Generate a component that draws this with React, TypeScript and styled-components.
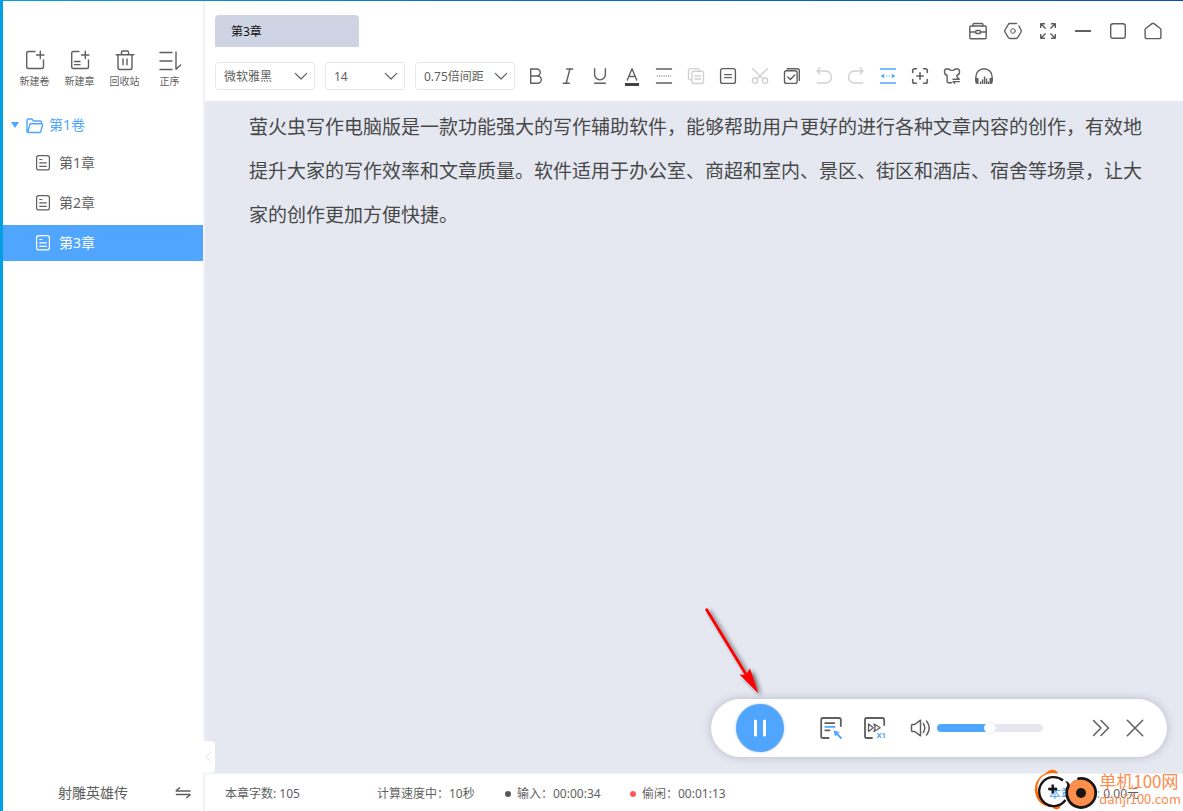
import React, { useState } from "react";
import styled, { createGlobalStyle } from "styled-components";

const GlobalStyle = createGlobalStyle`
  *, *::before, *::after { box-sizing: border-box; }
  body {
    margin: 0;
    background: #fff;
    color: #5f5f5f;
    font-family: "Noto Sans", "Noto Sans CJK SC", sans-serif;
    font-size: 12px;
    line-height: 20px;
  }
  button, input, select { font: inherit; color: inherit; }
  button { border: 0; padding: 0; background: none; cursor: pointer; }
  svg { display: block; overflow: visible; }
`;

/* ---------- icons ---------- */

const IconSvg = styled.svg<{ $weight?: number }>`
  flex: none;
  fill: none;
  stroke: currentColor;
  stroke-width: ${(p) => p.$weight ?? 1.4};
  stroke-linecap: round;
  stroke-linejoin: round;
`;

type IconProps = { size?: number; weight?: number; children: React.ReactNode };

const Icon = ({ size = 20, weight, children }: IconProps) => (
  <IconSvg width={size} height={size} viewBox={`0 0 ${size} ${size}`} $weight={weight} aria-hidden="true">
    {children}
  </IconSvg>
);

const icons = {
  newVolume: (
    <>
      <path d="M10 1.5H3.3Q1.7 1.5 1.7 3V17Q1.7 18.5 3.3 18.5H17Q18.5 18.5 18.5 17V10" />
      <path d="M15.3 1.2v7.4M11.6 5h7.4" />
    </>
  ),
  newChapter: (
    <>
      <path d="M9 1.5H3.3Q1.7 1.5 1.7 3V17Q1.7 18.5 3.3 18.5H17Q18.5 18.5 18.5 17V10" />
      <path d="M15.3 1.2v7.4M11.6 5h7.4M4.5 11.5h5.5M4.5 14.6h5.5" />
    </>
  ),
  trash: (
    <path d="M1.2 4.7h17.6M6.5 4.5V2.2Q6.5 1 7.7 1h4.6Q13.5 1 13.5 2.2v2.3M3 5v12.6q0 1.9 1.8 1.9h10.4q1.8 0 1.8-1.9V5M8 9v5.8M12 9v5.8" />
  ),
  sort: <path d="M0 2.5h12M0 11h12M0 19.5h12M16 2v17.3l4.6-4.3" />,
  bold: <path d="M4.7 3h6a3.5 3.5 0 0 1 0 7h-6M10.7 10h1a3.6 3.6 0 0 1 0 7.2h-7V3" />,
  italic: <path d="M8.7 3h6M5.3 17.2h6M11.9 3L8.2 17.2" />,
  underline: <path d="M4.6 2.7v5.8a5.4 5.4 0 0 0 10.8 0V2.7M4.6 17.3h10.8" />,
  fontColor: (
    <>
      <path d="M5.3 14L10 2.7 14.7 14M6.8 10.5h6.4" />
      <rect x="3" y="17" width="14" height="3" fill="#434343" stroke="none" />
    </>
  ),
  divider: (
    <>
      <path d="M2.5 3h15M2.5 17h15" />
      <path d="M3 10h14" strokeWidth="1" strokeDasharray="1 1.2" strokeLinecap="butt" />
    </>
  ),
  copy: (
    <>
      <path d="M4.8 13.7h-.4q-1.9 0-1.9-2V4.6q0-2 2-2h7q2 0 2 1.9" />
      <rect x="6" y="5.3" width="11.5" height="12.2" rx="2" />
      <path d="M9 10h5.5M9 13h5.5" />
    </>
  ),
  paste: (
    <>
      <rect x="2.6" y="2.6" width="14.8" height="14.8" rx="2" />
      <path d="M6.6 8.6h6.8M6.6 11.6h6.8" />
    </>
  ),
  cut: (
    <>
      <circle cx="5" cy="14.7" r="2.7" />
      <circle cx="15" cy="14.7" r="2.7" />
      <path d="M2.7 2.7L13 12.8M17.3 2.7L7 12.8" />
    </>
  ),
  selectAll: (
    <>
      <rect x="2.5" y="4.8" width="12.6" height="12.6" rx="2" />
      <path d="M5 2.8h10.3q2 0 2 2v9.7M5.8 11l2.6 2.6 4.4-4.6" />
    </>
  ),
  undo: <path d="M3 5h8.5a6 6 0 0 1 0 12H3.3M6 2L3 5l3 3" />,
  redo: <path d="M17 5H8.5a6 6 0 0 0 0 12h8.2M14 2l3 3-3 3" />,
  pageWidth: (
    <>
      <path d="M2.5 3h15M2.5 17h15" />
      <path d="M2.5 10l3.7-2.2v4.4zM17.5 10l-3.700-2.200v4.400zM8 9.500h1v1H8zM11 9.500h1v1h-1z" fill="currentColor" stroke="none" />
    </>
  ),
  focus: (
    <path
      d="M2.7 6.500V4.500q0-1.800 1.800-1.800h2M13.500 2.700h2q1.800 0 1.800 1.800v2M17.300 13.500v2q0 1.800-1.800 1.800h-2M6.500 17.300h-2q-1.800 0-1.800-1.800v-2M10 6.800v6.400M6.800 10h6.400"
      strokeWidth="1.600"
    />
  ),
  skin: (
    <>
      <path d="M9.500 16.800H6.500q-1.400 0-1.400-1.400V9.200q-2 0-2.600-2.700Q2.200 3.500 4 3h2.200q1 0 1.600.8 2.200 1.200 4.400 0 .6-.8 1.600-.8H16q1.800.5 1.500 3.500-.6 2.700-2.600 2.700v1.500" />
      <path d="M11 13.200h6.300l-1.700-1.600M17.300 15.600H11l1.700 1.700" />
    </>
  ),
  listen: (
    <>
      <path d="M1.900 14v-3.200a8.100 8.100 0 0 1 16.200 0V14" />
      <path d="M1.200 12h3.300v6H3.200q-2 0-2-2zM18.800 12h-3.300v6h1.300q2 0 2-2z" fill="currentColor" stroke="none" />
      <path d="M6.500 15.500V18M8.500 13.500V18M10.500 10.500V18M12.500 12.500V18M14.300 15.500V18" strokeLinecap="butt" />
    </>
  ),
  toolbox: (
    <>
      <rect x="1.800" y="5" width="16.400" height="12.800" rx="1.200" />
      <path d="M5 5V3.700q0-1.200 1.200-1.200h7.600q1.200 0 1.200 1.200V5M1.800 11h5.700M12.500 11h5.700" />
      <rect x="7.800" y="9.500" width="4.600" height="3" rx=".8" />
    </>
  ),
  settings: (
    <>
      <path d="M16 5l2 4q.6 1 0 2l-3.200 5.400q-.6 1.100-1.800 1.100H7q-1.200 0-1.800-1.100L2 11q-.6-1 0-2l3.200-5.400Q5.800 2.500 7 2.500h6.500" />
      <circle cx="10" cy="10" r="2.300" strokeWidth="1" />
    </>
  ),
  fullscreen: (
    <path
      d="M2.700 7V2.700H7M3 3l4.600 4.600M13 2.700h4.300V7M17 3l-4.600 4.600M2.700 13v4.300H7M3 17l4.600-4.600M13 17.300h4.300V13M17 17l-4.600-4.600"
      strokeLinecap="butt"
    />
  ),
  minimize: <path d="M2.700 10h14.600" strokeWidth="1.800" />,
  maximize: <rect x="2.700" y="2.700" width="14.600" height="14.600" rx="2.300" />,
  home: <path d="M10 2.200q.5 0 1 .4l6.300 4.900q.6.500.6 1.200v7q0 1.900-1.900 1.900H4q-1.900 0-1.900-1.900v-7q0-.7.600-1.200L9 2.600q.5-.4 1-.4z" />,
  document: (
    <>
      <rect x="3.600" y="2.600" width="12.800" height="14.300" rx="2.200" />
      <path d="M6.300 6.500h3M6.300 9.900h7.400M6.300 13.400h7.400" strokeLinecap="butt" />
    </>
  ),
  folder: (
    <path d="M2.800 16.500q-.8 0-.8-1V4.300q0-1.300 1.300-1.300h3.500L8.500 5h6.800q1.200 0 1.200 1.200v1.500M2.800 16.500h11.700q1 0 1.300-1L17.500 9q.3-1.300-1-1.300H6q-1 0-1.300 1z" />
  ),
  swap: <path d="M2.800 8H17.500M2.800 8L7 4.500M17.500 11.500H2.800M17.500 11.500L13.300 15" strokeLinecap="butt" strokeWidth="1.600" />,
};

const Chevron = () => (
  <Icon size={12} weight={1.2}>
    <path d="M.3 3.300L6 9l5.700-5.700" />
  </Icon>
);

/* ---------- page frame ---------- */

const Frame = styled.div`
  position: relative;
  display: flex;
  flex-direction: column;
  min-height: 100vh;
`;

const DesktopEdge = styled.div`
  height: 1px;
  background: linear-gradient(90deg, #0a9fe0, #0872c8 40%, #0a4fae);
`;

const Window = styled.div`
  flex: 1;
  display: flex;
  border-left: 3px solid #02a0e3;
`;

const Sidebar = styled.aside`
  flex: none;
  width: 202px;
  display: flex;
  flex-direction: column;
  border-right: 2px solid #f2f2f5;
`;

const SidebarTools = styled.div`
  display: flex;
  padding: 49px 0 0 9px;
`;

const SidebarTool = styled.button`
  width: 45px;
  display: flex;
  flex-direction: column;
  align-items: center;
  gap: 3px;
  font-size: 10px;
  line-height: 16px;
`;

const Tree = styled.nav`
  display: flex;
  flex-direction: column;
  gap: 4px;
  padding-top: 20px;
`;

const VolumeRow = styled.button`
  height: 32px;
  display: flex;
  align-items: center;
  gap: 6px;
  padding-left: 8px;
  color: #4fa6ff;
  font-size: 14px;
`;

const Caret = styled.span`
  border: 4px solid transparent;
  border-top: 6px solid currentColor;
  border-bottom: 0;
`;

const ChapterRow = styled.button<{ $active?: boolean }>`
  height: 36px;
  display: flex;
  align-items: center;
  gap: 6px;
  padding-left: 30px;
  font-size: 14px;
  color: ${(p) => (p.$active ? "#fff" : "inherit")};
  background: ${(p) => (p.$active ? "#50a6ff" : "transparent")};
`;

const BookBar = styled.div`
  margin-top: auto;
  height: 36px;
  display: flex;
  align-items: center;
  justify-content: space-between;
  padding: 0 10px 0 55px;
  font-size: 14px;
`;

/* ---------- main column ---------- */

const Main = styled.main`
  flex: 1;
  min-width: 0;
  display: flex;
  flex-direction: column;
`;

const TitleRow = styled.header`
  display: flex;
  justify-content: space-between;
  align-items: flex-start;
  padding: 14px 13px 0 10px;
`;

const ChapterTab = styled.button`
  width: 144px;
  height: 32px;
  padding: 2px 16px 0;
  border-radius: 4px 4px 0 0;
  background: #cfd4e4;
  color: #111;
  text-align: left;
`;

const WindowButtons = styled.div`
  display: flex;
`;

const WindowButton = styled.button`
  width: 35px;
  height: 32px;
  display: grid;
  place-items: center;
`;

const Toolbar = styled.div`
  display: flex;
  align-items: center;
  padding: 15px 10px 11px;
`;

const SelectGroup = styled.div`
  display: flex;
  gap: 10px;
  margin-right: 5px;
`;

const SelectBox = styled.div<{ $width: number }>`
  width: ${(p) => p.$width}px;
  display: grid;
  align-items: center;
  & > * { grid-area: 1 / 1; }
  & > svg {
    justify-self: end;
    margin-right: 8px;
    pointer-events: none;
  }
`;

const Select = styled.select`
  appearance: none;
  width: 100%;
  height: 28px;
  padding: 2px 8px 0;
  border: 1px solid #e8e8e8;
  border-radius: 3px;
  background: #fff;
`;

const ToolButton = styled.button<{ $tone?: "muted" | "active" }>`
  width: 32px;
  height: 28px;
  display: grid;
  place-items: center;
  color: ${(p) => (p.$tone === "muted" ? "#d0d0d0" : p.$tone === "active" ? "#50a6ff" : "inherit")};
`;

const Editor = styled.section`
  position: relative;
  flex: 1;
  padding: 4px 36px 96px 44px;
  background: #e5e8f1;
`;

const Paragraph = styled.p`
  margin: 0;
  font-size: 19px;
  line-height: 44px;
  color: #484848;
`;

const CollapseTab = styled.button`
  position: absolute;
  left: -2px;
  bottom: 0;
  width: 12px;
  height: 32px;
  display: grid;
  place-items: center;
  border-radius: 0 4px 4px 0;
  background: #fff;
  color: #dfe2ec;
`;

const StatusBar = styled.footer`
  height: 38px;
  display: flex;
  align-items: center;
  padding: 2px 44px 0 20px;
  border-top: 1px solid #f0f1f5;
`;

const Status = styled.span<{ $width?: number }>`
  display: flex;
  align-items: center;
  gap: 6px;
  min-width: ${(p) => p.$width ?? 0}px;
  white-space: pre;
`;

const Dot = styled.i<{ $color: string }>`
  width: 6px;
  height: 6px;
  border-radius: 50%;
  background: ${(p) => p.$color};
`;

const Income = styled.span`
  margin-left: auto;
  b {
    font-weight: 400;
    color: #50a6ff;
  }
`;

/* ---------- read-aloud player ---------- */

const Player = styled.div`
  position: absolute;
  right: 16px;
  bottom: 16px;
  width: 456px;
  height: 58px;
  display: flex;
  align-items: center;
  padding: 0 15px 0 25px;
  border-radius: 29px;
  background: #fff;
  box-shadow: 0 0 8px rgba(90, 95, 120, 0.35);
`;

const PauseButton = styled.button`
  width: 48px;
  height: 48px;
  display: grid;
  place-items: center;
  margin-right: 25px;
  border-radius: 50%;
  background: #50a6ff;
  color: #fff;
  box-shadow: 0 0 3px rgba(80, 90, 120, 0.35);
`;

const PlayerButton = styled.button<{ $width: number }>`
  width: ${(p) => p.$width}px;
  height: 34px;
  display: grid;
  place-items: center;
`;

const VolumeGroup = styled.div`
  flex: 1;
  display: flex;
  align-items: center;
  padding-left: 8px;
`;

const Volume = styled.input`
  appearance: none;
  width: 106px;
  height: 8px;
  margin: 0;
  border-radius: 4px;
  background: linear-gradient(90deg, #50a6ff var(--level), #e5e8f1 var(--level));
  &::-webkit-slider-thumb {
    appearance: none;
    width: 12px;
    height: 12px;
    border: 1px solid #edf0f6;
    border-radius: 50%;
    background: #fff;
  }
`;

const SpeedLabel = styled.text`
  font: 700 8px Roboto, sans-serif;
  fill: #50a6ff;
  stroke: none;
`;

const Pointer = styled.svg`
  position: absolute;
  left: -8px;
  bottom: 61px;
  pointer-events: none;
  filter: drop-shadow(3px 2px 2px rgba(0, 0, 0, 0.55));
`;

/* ---------- site mark ---------- */

const SiteMark = styled.div`
  position: absolute;
  right: 2px;
  bottom: 0;
  display: flex;
  align-items: flex-start;
  color: #fb8b50;
  font-family: "Noto Sans CJK SC", sans-serif;
  pointer-events: none;
`;

const SiteText = styled.div`
  display: flex;
  flex-direction: column;
  padding-top: 6px;
`;

const SiteName = styled.span`
  font-size: 17px;
  line-height: 20px;
`;

const SiteUrl = styled.span`
  font-size: 13px;
  line-height: 16px;
`;

const SiteLogo = () => (
  <svg width="69" height="46" viewBox="0 0 69 46" aria-hidden="true">
    <path
      d="M28 8.500C26.500 4 20 3.500 16 8C7 12 4 20 5.200 28C7 37 14 42 22 42Q27 47 31 41.500Q18 41.500 11.500 34.500C5 26 6.500 15 14 10.500Q20 7 28 8.500Z"
      fill="#ff6a08"
    />
    <path d="M33 15.500A14.500 14.500 0 1 0 35.500 35" fill="none" stroke="#1b1514" strokeWidth="2.400" />
    <path d="M22.700 19.500v9M18.200 24h9" stroke="#1b1514" strokeWidth="2.400" />
    <path d="M35 16Q37.500 17 37.500 24L40.500 22Q45 19 46 14.500Q42 16.500 40 20Q38.500 16 35 16Z" fill="#1b1514" />
    <circle cx="51" cy="28" r="14" fill="#fd8f4d" />
    <path d="M48.500 13.700A14.500 14.500 0 1 1 38.500 21" fill="none" stroke="#1b1514" strokeWidth="2.800" strokeLinecap="round" />
    <circle cx="51" cy="28" r="5" fill="#1b1514" />
  </svg>
);

/* ---------- data ---------- */

type IconName = keyof typeof icons;

const sidebarTools: [IconName, string][] = [
  ["newVolume", "新建卷"],
  ["newChapter", "新建章"],
  ["trash", "回收站"],
  ["sort", "正序"],
];

const windowButtons: [IconName, string][] = [
  ["toolbox", "工具箱"],
  ["settings", "设置"],
  ["fullscreen", "全屏"],
  ["minimize", "最小化"],
  ["maximize", "最大化"],
  ["home", "主页"],
];

const tools: [IconName, string, ("muted" | "active")?][] = [
  ["bold", "加粗"],
  ["italic", "斜体"],
  ["underline", "下划线"],
  ["fontColor", "文字颜色"],
  ["divider", "分隔线"],
  ["copy", "复制", "muted"],
  ["paste", "粘贴"],
  ["cut", "剪切", "muted"],
  ["selectAll", "全选"],
  ["undo", "撤销", "muted"],
  ["redo", "重做", "muted"],
  ["pageWidth", "页宽", "active"],
  ["focus", "专注"],
  ["skin", "皮肤"],
  ["listen", "听书"],
];

const selects = [
  { label: "字体", width: 100, options: ["微软雅黑", "宋体"] },
  { label: "字号", width: 80, options: ["14", "16", "18"] },
  { label: "行距", width: 100, options: ["0.75倍间距", "1倍间距"] },
];

const chapters = ["第1章", "第2章", "第3章"];

export default function App() {
  const [active, setActive] = useState("第3章");
  const [volume, setVolume] = useState(50);

  return (
    <Frame>
      <GlobalStyle />
      <DesktopEdge />
      <Window>
        <Sidebar>
          <SidebarTools>
            {sidebarTools.map(([icon, label]) => (
              <SidebarTool key={label}>
                <Icon>{icons[icon]}</Icon>
                {label}
              </SidebarTool>
            ))}
          </SidebarTools>
          <Tree aria-label="目录">
            <VolumeRow>
              <Caret />
              <Icon size={18}>{icons.folder}</Icon>
              第1卷
            </VolumeRow>
            {chapters.map((name) => (
              <ChapterRow key={name} $active={name === active} onClick={() => setActive(name)}>
                <Icon weight={1.2}>{icons.document}</Icon>
                {name}
              </ChapterRow>
            ))}
          </Tree>
          <BookBar>
            射雕英雄传
            <button aria-label="切换作品">
              <Icon>{icons.swap}</Icon>
            </button>
          </BookBar>
        </Sidebar>

        <Main>
          <TitleRow>
            <ChapterTab>{active}</ChapterTab>
            <WindowButtons>
              {windowButtons.map(([icon, label]) => (
                <WindowButton key={label} aria-label={label}>
                  <Icon>{icons[icon]}</Icon>
                </WindowButton>
              ))}
            </WindowButtons>
          </TitleRow>

          <Toolbar>
            <SelectGroup>
              {selects.map(({ label, width, options }) => (
                <SelectBox key={label} $width={width}>
                  <Select aria-label={label}>
                    {options.map((o) => (
                      <option key={o}>{o}</option>
                    ))}
                  </Select>
                  <Chevron />
                </SelectBox>
              ))}
            </SelectGroup>
            {tools.map(([icon, label, tone]) => (
              <ToolButton key={label} aria-label={label} $tone={tone}>
                <Icon>{icons[icon]}</Icon>
              </ToolButton>
            ))}
          </Toolbar>

          <Editor>
            <Paragraph>
              萤火虫写作电脑版是一款功能强大的写作辅助软件，能够帮助用户更好的进行各种文章内容的创作，有效地提升大家的写作效率和文章质量。软件适用于办公室、商超和室内、景区、街区和酒店、宿舍等场景，让大家的创作更加方便快捷。
            </Paragraph>
            <CollapseTab aria-label="收起目录">
              <Icon size={10} weight={1}>
                <path d="M7 0L2 5l5 5" />
              </Icon>
            </CollapseTab>

            <Player>
              <Pointer width="60" height="90" viewBox="0 0 60 90" aria-hidden="true">
                <path d="M3.700 3.700L44 70" stroke="#f00" strokeWidth="2.800" strokeLinecap="round" />
                <path d="M55.500 87.500L36.500 68.500L43 69L47 62.500Z" fill="#f00" />
              </Pointer>
              <PauseButton aria-label="暂停">
                <Icon weight={3}>
                  <path d="M5.500 3v14M14.500 3v14" />
                </Icon>
              </PauseButton>
              <PlayerButton $width={44} aria-label="朗读位置">
                <Icon size={24} weight={1.8}>
                  <path d="M21.800 10V3.800Q21.800 2 20 2H4Q2.200 2 2.200 3.800v16.400Q2.200 22 4 22h5.500M6.200 7.200h9M6.200 14.300h4.300" />
                  <path d="M6.200 10.800h9.500M17 17l5 5" stroke="#50a6ff" />
                  <path d="M14.500 14.500l6 1.500-4.500 4.500z" fill="#50a6ff" stroke="none" />
                </Icon>
              </PlayerButton>
              <PlayerButton $width={44} aria-label="朗读速度 X1">
                <Icon size={24} weight={1.8}>
                  <path d="M21.200 9V3.800Q21.200 2 19.400 2H3.800Q2 2 2 3.800v16.400Q2 22 3.800 22H9" />
                  <path d="M5.500 8v7.500l4.800-3.700zM11 8l6.200 3.800L11 15.500l1.200-3.700z" strokeWidth="1.300" />
                  <SpeedLabel x="13.500" y="22">X1</SpeedLabel>
                </Icon>
              </PlayerButton>
              <VolumeGroup>
                <PlayerButton $width={32} aria-label="静音">
                  <Icon size={24} weight={1.5}>
                    <path d="M3.500 8.500h2.300l5.700-4.300v15.600l-5.700-4.300H3.500q-1 0-1-1v-5q0-1 1-1z" />
                    <path d="M14.300 7.500q3 4.500 0 9M17.500 5q5.500 7 0 14" />
                  </Icon>
                </PlayerButton>
                <Volume
                  type="range"
                  aria-label="音量"
                  value={volume}
                  onChange={(e) => setVolume(Number(e.target.value))}
                  style={{ "--level": `${volume}%` } as React.CSSProperties}
                />
              </VolumeGroup>
              <PlayerButton $width={34} aria-label="收起播放器">
                <Icon size={24} weight={1.5}>
                  <path d="M4.500 4.500L12 12l-7.500 7.500M12 4.500l7.500 7.500-7.500 7.500" />
                </Icon>
              </PlayerButton>
              <PlayerButton $width={34} aria-label="关闭播放器">
                <Icon size={24} weight={1.5}>
                  <path d="M4.300 4.300l15.400 15.400M19.700 4.300L4.300 19.700" />
                </Icon>
              </PlayerButton>
            </Player>
          </Editor>

          <StatusBar>
            <Status $width={152}>本章字数: 105</Status>
            <Status $width={128}>计算速度中：10秒</Status>
            <Status $width={125}>
              <Dot $color="#595959" />
              输入：00:00:34
            </Status>
            <Status>
              <Dot $color="#ff5b5b" />
              偷闲：00:01:13
            </Status>
            <Income>
              <b>本章稿费:</b> 0.00元
            </Income>
          </StatusBar>
        </Main>
      </Window>

      <SiteMark>
        <SiteLogo />
        <SiteText>
          <SiteName>单机100网</SiteName>
          <SiteUrl>danji100.com</SiteUrl>
        </SiteText>
      </SiteMark>
    </Frame>
  );
}
